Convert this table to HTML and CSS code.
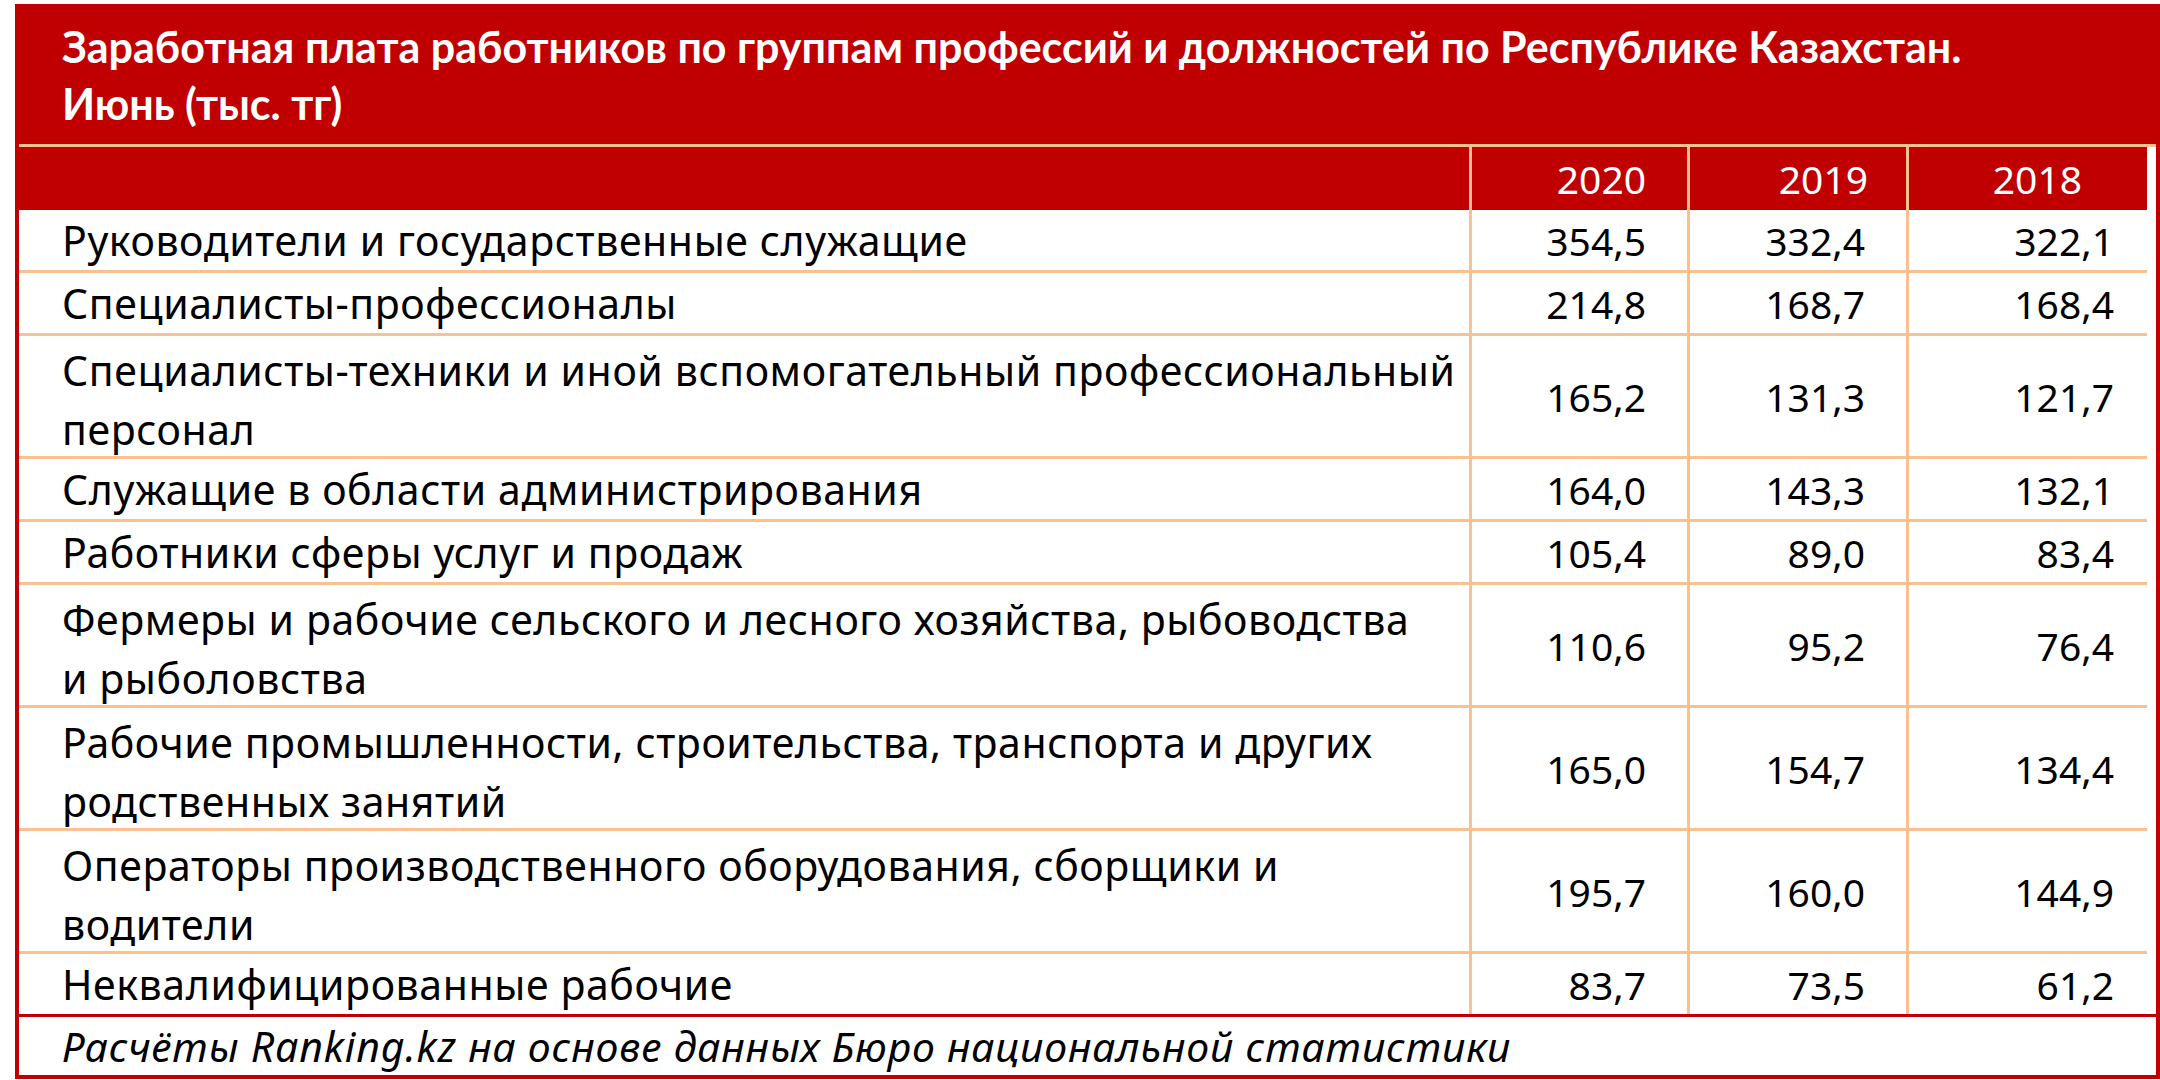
FILE: index.html
```html
<!DOCTYPE html>
<html lang="ru">
<head>
<meta charset="utf-8">
<title>Заработная плата</title>
<link rel="stylesheet" href="styles.css">
</head>
<body>
<div class="sheet">
  <div class="title">
    <div class="title-line">Заработная плата работников по группам профессий и должностей по Республике Казахстан.</div>
    <div class="title-line">Июнь (тыс. тг)</div>
  </div>
  <div class="grid">
    <div class="hd"></div>
    <div class="hd num hd-a">2020</div>
    <div class="hd num hd-b">2019</div>
    <div class="hd num hd-c">2018</div>

    <div class="name">Руководители и государственные служащие</div>
    <div class="num">354,5</div><div class="num">332,4</div><div class="num last">322,1</div>

    <div class="name">Специалисты-профессионалы</div>
    <div class="num">214,8</div><div class="num">168,7</div><div class="num last">168,4</div>

    <div class="name two">Специалисты-техники и иной вспомогательный профессиональный<br>персонал</div>
    <div class="num">165,2</div><div class="num">131,3</div><div class="num last">121,7</div>

    <div class="name">Служащие в области администрирования</div>
    <div class="num">164,0</div><div class="num">143,3</div><div class="num last">132,1</div>

    <div class="name">Работники сферы услуг и продаж</div>
    <div class="num">105,4</div><div class="num">89,0</div><div class="num last">83,4</div>

    <div class="name two">Фермеры и рабочие сельского и лесного хозяйства, рыбоводства<br>и рыболовства</div>
    <div class="num">110,6</div><div class="num">95,2</div><div class="num last">76,4</div>

    <div class="name two">Рабочие промышленности, строительства, транспорта и других<br>родственных занятий</div>
    <div class="num">165,0</div><div class="num">154,7</div><div class="num last">134,4</div>

    <div class="name two">Операторы производственного оборудования, сборщики и<br>водители</div>
    <div class="num">195,7</div><div class="num">160,0</div><div class="num last">144,9</div>

    <div class="name">Неквалифицированные рабочие</div>
    <div class="num">83,7</div><div class="num">73,5</div><div class="num last">61,2</div>
  </div>
  <div class="foot">Расчёты Ranking.kz на основе данных Бюро национальной статистики</div>
</div>
</body>
</html>
```
FILE: styles.css
```css
* { box-sizing: border-box; }

body {
  margin: 0;
  background: #ffffff;
}

.sheet {
  margin: 4px 0 0 15px;
  width: 2145px;
  border: 4px solid #c00000;
  font-family: "Noto Sans", "Open Sans", sans-serif;
  color: #000000;
}

.title {
  height: 139px;
  background: #c00000;
  border-bottom: 3px solid #fac090;
  padding: 0 0 3px 43px;
  color: #ffffff;
  font-family: Lato, "Noto Sans", sans-serif;
  font-weight: bold;
  font-size: 43px;
  display: flex;
  flex-direction: column;
  justify-content: center;
}

.title-line {
  height: 57px;
  line-height: 57px;
  white-space: nowrap;
}

.grid {
  display: grid;
  grid-template-columns: 1450px 218px 219px 241px;
  grid-template-rows: 63px 60px 63px 123px 63px 63px 123px 123px 123px 63px;
  font-size: 39px;
  line-height: 59px;
}

.grid > div {
  display: flex;
  align-items: center;
}

.grid > div:nth-child(n+9) {
  border-top: 3px solid #fac090;
}

.hd {
  background: #c00000;
  color: #ffffff;
}

.name {
  padding-left: 43px;
  white-space: nowrap;
  font-size: 41px;
  letter-spacing: 0.6px;
}

.two {
  padding-top: 8px;
}

.num {
  justify-content: flex-end;
  padding-right: 41px;
  border-left: 3px solid #fac090;
}

.num.last {
  padding-right: 33px;
}

.hd.hd-a {
  padding-right: 41px;
}

.hd.hd-b {
  padding-right: 38px;
}

.hd.hd-c {
  padding-right: 65px;
}

.foot {
  height: 61px;
  border-top: 3px solid #c00000;
  padding-left: 43px;
  font-style: italic;
  font-size: 41px;
  letter-spacing: 0.8px;
  display: flex;
  align-items: center;
}
```
